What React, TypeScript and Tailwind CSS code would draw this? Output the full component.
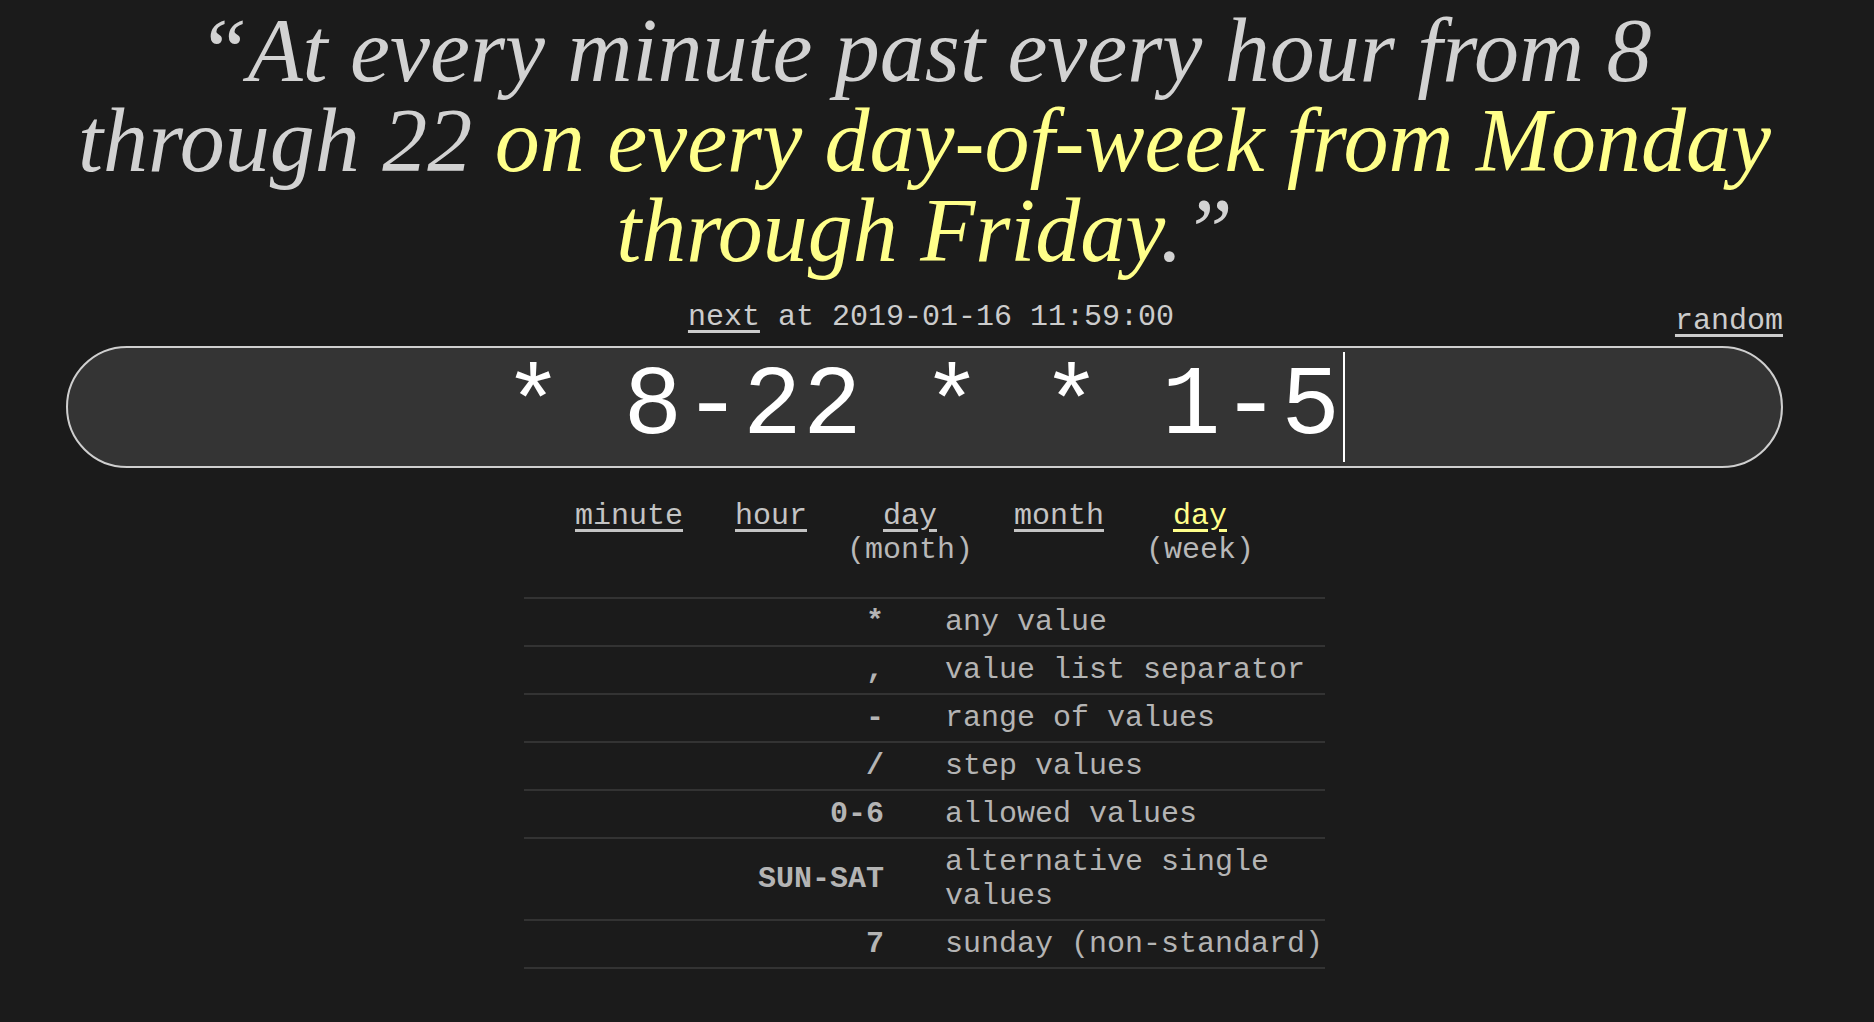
const fields = [
  { name: 'minute', w: 'w-[142px]' },
  { name: 'hour', w: 'w-[142px]' },
  { name: 'day', sub: '(month)', w: 'w-[136px]' },
  { name: 'month', w: 'w-[162px]' },
  { name: 'day', sub: '(week)', active: true, w: 'w-[120px]' },
];

const rows = [
  { sym: '*', desc: 'any value' },
  { sym: ',', desc: 'value list separator' },
  { sym: '-', desc: 'range of values' },
  { sym: '/', desc: 'step values' },
  { sym: '0-6', desc: 'allowed values' },
  { sym: 'SUN-SAT', desc: 'alternative single values' },
  { sym: '7', desc: 'sunday (non-standard)' },
];

export default function App() {
  return (
    <div className="min-h-screen bg-[#1b1b1b] font-['Liberation_Mono',monospace] text-[#cccccc]">
      <div className="ml-[66px] w-[1717px] pt-[6px]">
        {/* human readable */}
        <h1 className="text-center font-['Liberation_Serif',serif] text-[90px] leading-[90px] font-normal italic text-[#d2d2d2]">
          “At every minute past every hour from 8 through 22{' '}
          <span className="text-[#ffff8a]">on every day-of-week from Monday through Friday</span>.”
        </h1>

        {/* next / random */}
        <div className="mt-[24px] grid grid-cols-[1fr_auto_1fr] text-[30px] leading-[34px]">
          <div />
          <div className="pl-[13px]">
            <a className="underline underline-offset-[5px]">next</a> at 2019-01-16 11:59:00
          </div>
          <div className="pt-[4px] text-right">
            <a className="underline underline-offset-[5px]">random</a>
          </div>
        </div>

        {/* expression */}
        <div className="mt-[8px] flex h-[122px] items-center justify-center rounded-full border-2 border-[#cfcfcf] bg-[#343434] text-[98px] leading-none tracking-[1px] text-white">
          <span className="whitespace-pre">* 8-22 * * 1-5</span>
          <span className="ml-[2px] inline-block h-[110px] w-[2px] bg-white" />
        </div>

        {/* field labels */}
        <div className="ml-[492px] mt-[31px] flex text-[30px] leading-[34px]">
          {fields.map((f, i) => (
            <div key={i} className={`flex flex-col items-center ${f.w}`}>
              <a className={`underline underline-offset-[5px] ${f.active ? 'text-[#ffff8a]' : 'text-[#c4c4c4]'}`}>{f.name}</a>
              {f.sub && <span className="text-[#b8b8b8]">{f.sub}</span>}
            </div>
          ))}
        </div>

        {/* legend */}
        <div className="mx-auto mt-[30px] w-[801px] border-b-2 border-[#333333] text-[30px] leading-[34px] text-[#b4b4b4]">
          {rows.map((r) => (
            <div key={r.sym} className="grid grid-cols-[360px_1fr] items-center border-t-2 border-[#333333] py-[6px]">
              <div className="text-right font-bold">{r.sym}</div>
              <div className="pl-[61px]">{r.desc}</div>
            </div>
          ))}
        </div>
      </div>
    </div>
  );
}
